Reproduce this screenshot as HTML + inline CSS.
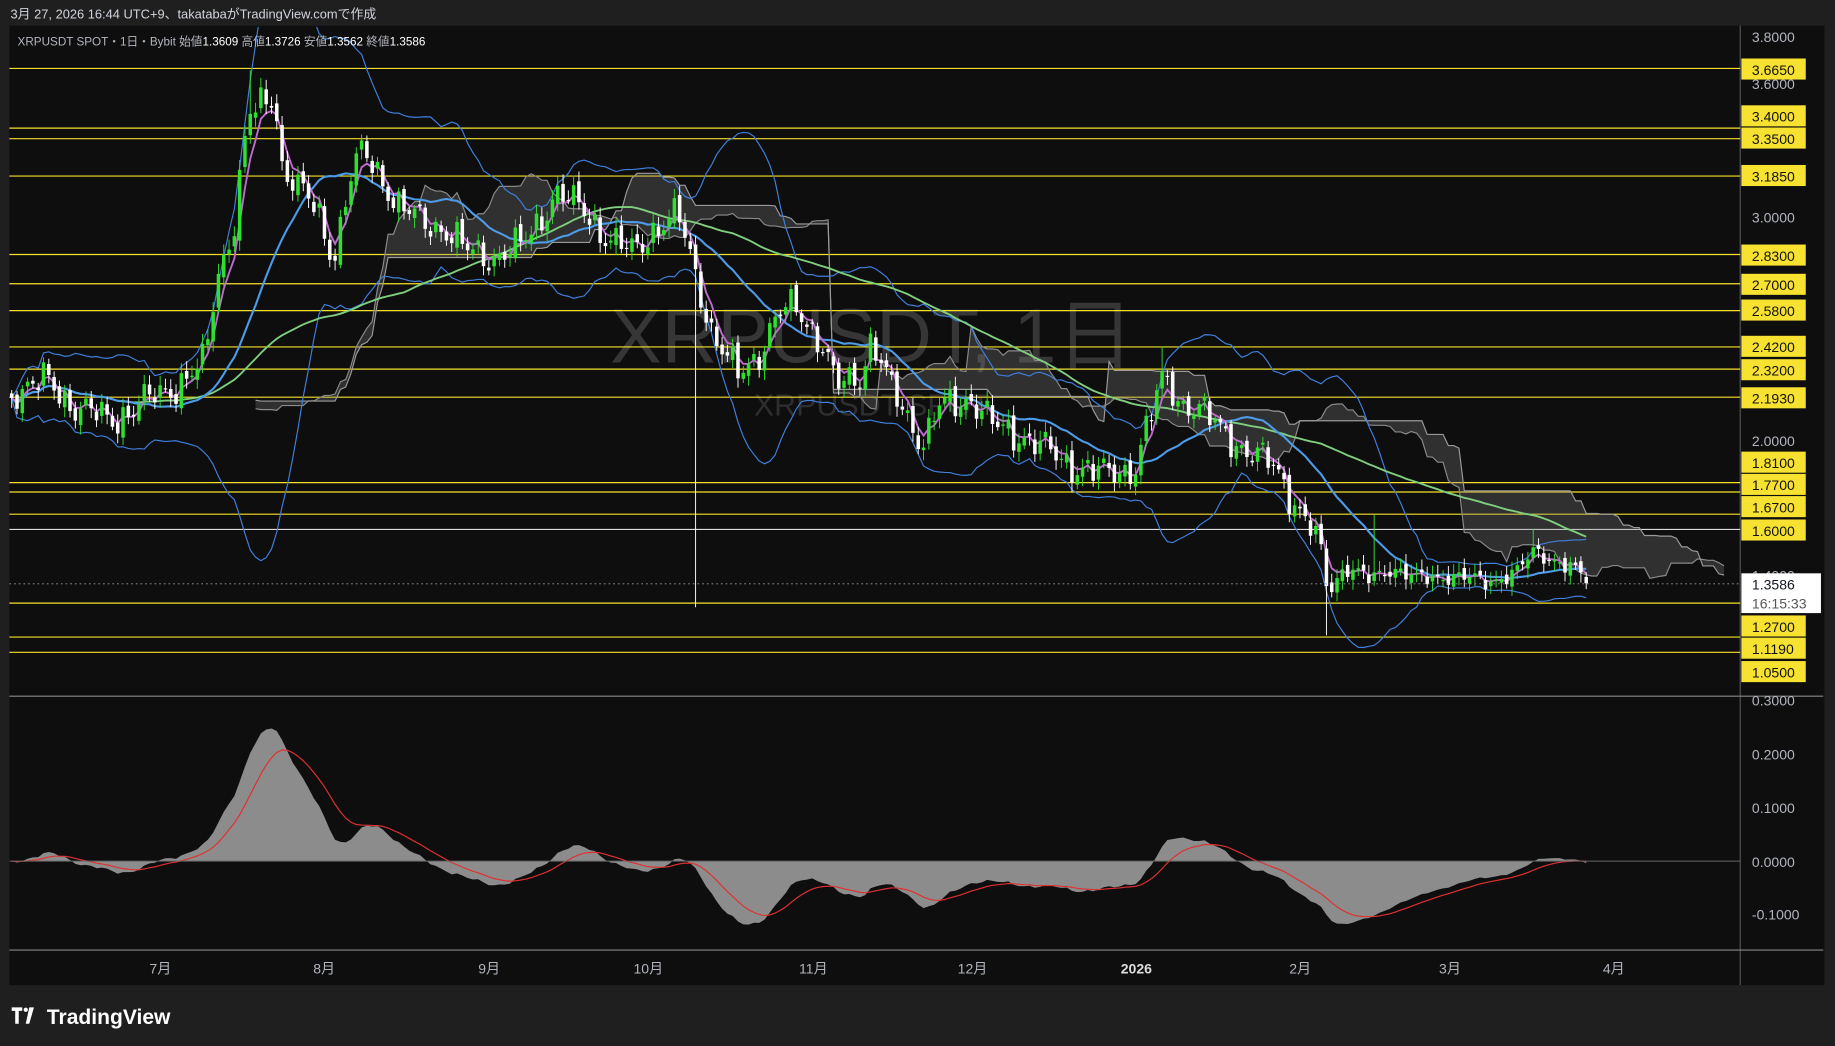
<!DOCTYPE html>
<html><head><meta charset="utf-8"><style>
html,body{margin:0;padding:0;background:#1f1f1f;overflow:hidden}
svg{display:block}
text{font-family:"Liberation Sans","Noto Sans CJK JP",sans-serif}
</style></head><body>
<svg id="s" width="1835" height="1046" viewBox="0 0 1568 894" preserveAspectRatio="none" xmlns="http://www.w3.org/2000/svg">
<defs><clipPath id="cm"><rect x="8" y="23" width="1479" height="572"/></clipPath>
<clipPath id="ci"><rect x="8" y="596" width="1479" height="216"/></clipPath></defs>
<rect x="0" y="0" width="1568" height="894" fill="#1f1f1f"/>
<text x="9" y="16" font-size="11" fill="#d1d4dc">3月 27, 2026 16:44 UTC+9、takatabaがTradingView.comで作成</text>
<rect x="8" y="22" width="1551" height="820" fill="#0e0e0e"/>
<line x1="1487" y1="22" x2="1487" y2="842" stroke="#555" stroke-width="1"/>
<line x1="8" y1="595" x2="1558" y2="595" stroke="#888" stroke-width="1"/>
<line x1="8" y1="812" x2="1558" y2="812" stroke="#888" stroke-width="1"/>
<text x="745" y="310" font-size="66" fill="#363636" text-anchor="middle">XRPUSDT, 1日</text>
<text x="745" y="355" font-size="26" fill="#2e2e2e" text-anchor="middle">XRPUSDT SPOT</text>
<g id="hl"></g>
<g id="ind" clip-path="url(#cm)"></g>
<g id="macd" clip-path="url(#ci)"></g>
<line x1="8" y1="736" x2="1487" y2="736" stroke="#666" stroke-width="0.8"/>
<line x1="8" y1="499" x2="1487" y2="499" stroke="#999" stroke-width="0.8" stroke-dasharray="1.5,2.5"/>
<text x="15" y="39" font-size="10" fill="#b2b5be">XRPUSDT SPOT・1日・Bybit  始値<tspan fill="#fff">1.3609</tspan>  高値<tspan fill="#fff">1.3726</tspan>  安値<tspan fill="#fff">1.3562</tspan>  終値<tspan fill="#fff">1.3586</tspan></text>
<g font-size="12" fill="#b2b5be" font-family="Liberation Sans" id="ax">
<text x="1497" y="36">3.8000</text><text x="1497" y="76">3.6000</text><text x="1497" y="190">3.0000</text><text x="1497" y="381">2.0000</text><text x="1497" y="496">1.4000</text><text x="1497" y="603">0.3000</text>
<text x="1497" y="649">0.2000</text><text x="1497" y="695">0.1000</text><text x="1497" y="741">0.0000</text><text x="1497" y="786">-0.1000</text>
</g>
<g id="lb"></g>
<rect x="1488" y="490" width="68" height="34" fill="#fff"/>
<text x="1497" y="504" font-size="12" fill="#131722">1.3586</text>
<text x="1497" y="520" font-size="12" fill="#555">16:15:33</text>
<g font-size="12" fill="#b2b5be" text-anchor="middle">
<text x="137" y="832">7月</text><text x="277" y="832">8月</text><text x="418" y="832">9月</text><text x="554" y="832">10月</text><text x="695" y="832">11月</text><text x="831" y="832">12月</text><text x="971" y="832" font-weight="bold" fill="#ddd">2026</text><text x="1111" y="832">2月</text><text x="1239" y="832">3月</text><text x="1379" y="832">4月</text>
</g>
<g fill="#fff"><path d="M10 861h9v3h-3v11h-3v-11h-3z"/><circle cx="22" cy="863" r="1.8"/><path d="M25 861h4l-4 14h-3z"/></g>
<text x="40" y="875" font-size="18" font-weight="bold" fill="#fff">TradingView</text>
</svg>
<script>
const NS="http://www.w3.org/2000/svg";
function el(p,t,a){const e=document.createElementNS(NS,t);for(const k in a)e.setAttribute(k,a[k]);document.getElementById(p).appendChild(e);return e;}
const Y=p=>376+(2-p)*191, P=y=>2-(y-376)/191;
const lv=[3.665,3.4,3.35,3.185,2.83,2.7,2.58,2.42,2.32,2.193,1.81,1.77,1.67,1.6,1.27,1.119,1.05];
const ly=[59,99,118,150,218,243,265,296,316,340,395,414,433,453,535,554,574];
lv.forEach((v,i)=>{const y=Math.round(Y(v))+0.5;
el("hl","line",{x1:8,x2:1487,y1:y,y2:y,stroke:(v==1.6)?"#ddd":"#f5e12a","stroke-width":1});
el("lb","rect",{x:1488,y:ly[i]-9,width:55,height:18,fill:"#f8e231"});
const t=el("lb","text",{x:1497,y:ly[i]+5,"font-size":12,fill:"#111"});t.textContent=v.toFixed(4);});
const K=[[10,335],[40,325],[60,345],[95,360],[120,345],[150,330],[175,310],[185,240],[200,190],[212,100],[225,90],[235,80],[240,140],[255,160],[270,180],[285,220],[300,150],[310,130],[325,150],[340,175],[360,190],[380,195],[400,215],[420,220],[445,210],[460,190],[475,165],[500,180],[520,205],[540,215],[560,195],[580,185],[595,235],[610,290],[630,320],[650,300],[665,270],[680,260],[700,290],[715,330],[735,320],[745,290],[760,330],[790,380],[800,350],[830,340],[850,365],[880,375],[910,395],[940,405],[970,400],[985,350],[995,320],[1010,345],[1030,355],[1050,370],[1065,390],[1090,395],[1110,440],[1125,460],[1135,500],[1150,485],[1170,495],[1190,485],[1210,495],[1240,492],[1270,497],[1295,490],[1312,470],[1330,480],[1350,490],[1357,497]];
function yAt(x){for(let i=0;i<K.length-1;i++){if(x<=K[i+1][0]){const f=(x-K[i][0])/(K[i+1][0]-K[i][0]);return K[i][1]+f*(K[i+1][1]-K[i][1]);}}return K[K.length-1][1];}
const N=298,st=4.53,X=i=>10+i*st;
const C=[],O=[],H=[],L=[];
for(let i=0;i<N;i++){const amp=i>250?0.5:1;const y=yAt(X(i))+amp*(9*Math.sin(i*1.7)+6*Math.sin(i*0.63+1)+4*Math.sin(i*2.9));C.push(P(y));}
C[N-1]=1.3586;
for(let i=0;i<N;i++){const o=i?C[i-1]+0.02*Math.sin(i*2.3):C[i]+0.02;O.push(o);
const w1=0.015+0.03*Math.abs(Math.sin(i*3.1)),w2=0.015+0.03*Math.abs(Math.cos(i*1.9));
H.push(Math.max(o,C[i])+w1);L.push(Math.min(o,C[i])-w2);}
const sp=(x)=>Math.round((x-10)/st);
L[sp(595)]=P(519);L[sp(1133)]=P(543);H[sp(1175)]=P(440);H[sp(993)]=P(296);H[sp(212)]=P(60);H[sp(1312)]=P(452);
function sma(a,n){return a.map((v,i)=>{const s=Math.max(0,i-n+1);let t=0;for(let j=s;j<=i;j++)t+=a[j];return t/(i-s+1);});}
function ema(a,n){const k=2/(n+1);let r=[],e=a[0];a.forEach(v=>{e=v*k+e*(1-k);r.push(e);});return r;}
function poly(a,off,col,w,grp){let d="";a.forEach((v,i)=>{if(v==null)return;d+=(d?"L":"M")+X(i+off).toFixed(1)+" "+Y(v).toFixed(1);});el(grp||"ind","path",{d,fill:"none",stroke:col,"stroke-width":w});}
function hh(a,i,n){let m=-1e9;for(let j=Math.max(0,i-n+1);j<=i;j++)m=Math.max(m,a[j]);return m;}
function ll(a,i,n){let m=1e9;for(let j=Math.max(0,i-n+1);j<=i;j++)m=Math.min(m,a[j]);return m;}
const ten=C.map((v,i)=>(hh(H,i,9)+ll(L,i,9))/2),kij=C.map((v,i)=>(hh(H,i,26)+ll(L,i,26))/2);
const sa=ten.map((v,i)=>(v+kij[i])/2),sb=C.map((v,i)=>(hh(H,i,52)+ll(L,i,52))/2);
let d1="",d2="";for(let i=20;i<N;i++){d1+=(d1?"L":"M")+X(i+26)+" "+Y(sa[i]);}
for(let i=N-1;i>=20;i--){d2+="L"+X(i+26)+" "+Y(sb[i]);}
el("ind","path",{d:d1+d2+"Z",fill:"rgba(130,130,130,0.3)",stroke:"none"});
poly(sa.slice(20),46,"#8a8a8a",1);poly(sb.slice(20),46,"#9a9a9a",1);
const m20=sma(C,20),sd=C.map((v,i)=>{const s=Math.max(0,i-19);let t=0;for(let j=s;j<=i;j++)t+=(C[j]-m20[i])**2;return Math.sqrt(t/(i-s+1));});
poly(m20.map((m,i)=>m+2.6*sd[i]),0,"#3f7fdc",1);poly(m20.map((m,i)=>m-2.6*sd[i]),0,"#3f7fdc",1);
poly(sma(C,75),0,"#7fcf7f",1.6);poly(sma(C,21),0,"#4d9be8",1.8);poly(ema(C,4),0,"#c06ad0",1.6);
for(let i=0;i<N;i++){const up=C[i]>=O[i],col=up?"#2fe02f":"#ffffff",x=X(i);
el("ind","line",{x1:x,x2:x,y1:Y(H[i]),y2:Y(L[i]),stroke:col,"stroke-width":0.8});
const t=Y(Math.max(O[i],C[i])),b=Y(Math.min(O[i],C[i]));el("ind","rect",{x:x-1.5,y:t,width:3,height:Math.max(1,b-t),fill:col});}
const e12=ema(C,12),e26=ema(C,26),mc=e12.map((v,i)=>v-e26[i]),sg=ema(mc,9);
const MY=v=>736-v*330;let da="M"+X(0)+" 736";mc.forEach((v,i)=>da+="L"+X(i).toFixed(1)+" "+MY(v).toFixed(1));da+="L"+X(N-1)+" 736Z";
el("macd","path",{d:da,fill:"#8c8c8c",stroke:"none"});
let dm="";sg.forEach((v,i)=>dm+=(dm?"L":"M")+X(i).toFixed(1)+" "+MY(v).toFixed(1));el("macd","path",{d:dm,fill:"none",stroke:"#e03030","stroke-width":1});
</script>
</body></html>
